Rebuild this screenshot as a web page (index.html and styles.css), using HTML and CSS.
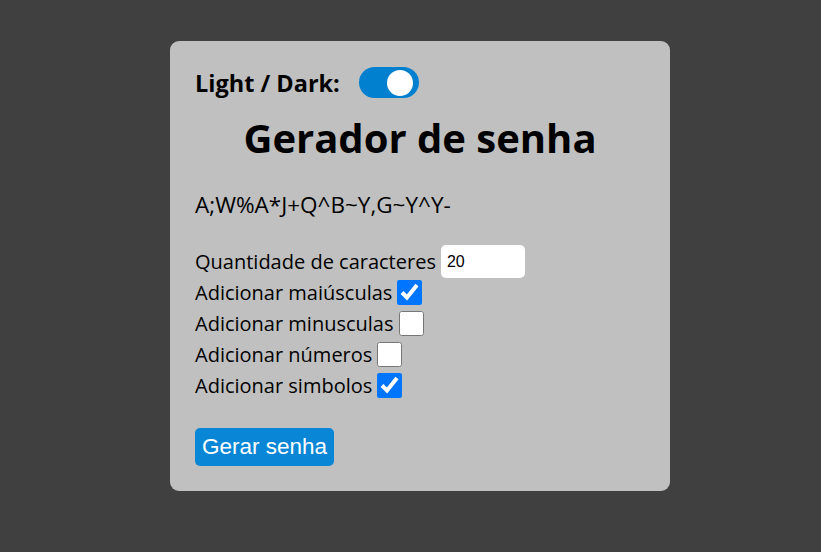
FILE: index.html
```html
<!DOCTYPE html>
<html lang="pt-BR">
<head>
<meta charset="utf-8">
<title>Gerador de senha</title>
<link rel="stylesheet" href="styles.css">
</head>
<body>
<main class="card">
  <div class="theme-row">
    <span class="theme-label">Light / Dark:</span>
    <label class="switch"><input type="checkbox" checked><span class="slider"></span></label>
  </div>
  <h1 class="title">Gerador de senha</h1>
  <p class="password">A;W%A*J+Q^B~Y,G~Y^Y-</p>
  <div class="options">
    <div class="opt"><label>Quantidade de caracteres</label> <input class="qty" type="number" value="20"></div>
    <div class="opt"><label>Adicionar maiúsculas</label> <input class="cb" type="checkbox" checked></div>
    <div class="opt"><label>Adicionar minusculas</label> <input class="cb" type="checkbox"></div>
    <div class="opt"><label>Adicionar números</label> <input class="cb" type="checkbox"></div>
    <div class="opt"><label>Adicionar simbolos</label> <input class="cb" type="checkbox" checked></div>
  </div>
  <button class="btn">Gerar senha</button>
</main>
</body>
</html>
```
FILE: styles.css
```css
html, body { margin: 0; padding: 0; }
body {
  background: #404040;
  width: 821px;
  height: 552px;
  overflow: hidden;
  font-family: "Open Sans", sans-serif;
  color: #000;
}
.card {
  box-sizing: border-box;
  width: 500px;
  height: 450px;
  margin: 41px 0 0 170px;
  background: #c0c0c0;
  border-radius: 9px;
  padding: 26px 25px 0 25px;
}
.theme-row {
  display: flex;
  align-items: center;
  gap: 19px;
  height: 31px;
}
.theme-label {
  font-weight: 700;
  font-size: 23.5px;
}
.switch {
  position: relative;
  display: inline-block;
  width: 60px;
  height: 31px;
}
.switch input { display: none; }
.slider {
  position: absolute;
  inset: 0;
  background: #0080cf;
  border-radius: 16px;
}
.slider::before {
  content: "";
  position: absolute;
  width: 26px;
  height: 26px;
  top: 2.5px;
  right: 6px;
  background: #fff;
  border-radius: 50%;
}
.title {
  margin: 13px 0 0;
  text-align: center;
  font-size: 40px;
  font-weight: 700;
  line-height: 54px;
}
.password {
  margin: 25px 0 0;
  font-size: 22.5px;
  line-height: 30px;
}
.options {
  margin-top: 26px;
  font-size: 20px;
}
.opt {
  display: flex;
  align-items: center;
  height: 31px;
}
.opt label { margin-right: 5px; }
.qty {
  box-sizing: border-box;
  width: 84px;
  height: 33px;
  border: none;
  border-radius: 5px;
  background: #fff;
  font-family: "Liberation Sans", Arial, sans-serif;
  font-size: 16px;
  padding: 0 6px;
  margin: 0;
  -moz-appearance: textfield;
}
.qty::-webkit-outer-spin-button,
.qty::-webkit-inner-spin-button { -webkit-appearance: none; margin: 0; }
.cb {
  width: 25px;
  height: 25px;
  margin: 0;
  accent-color: #0075ff;
}
.btn {
  margin-top: 27px;
  background: #0987d6;
  color: #fff;
  border: none;
  border-radius: 5px;
  font-family: "Liberation Sans", Arial, sans-serif;
  font-size: 22.5px;
  height: 38px;
  padding: 0 7px;
}
```
